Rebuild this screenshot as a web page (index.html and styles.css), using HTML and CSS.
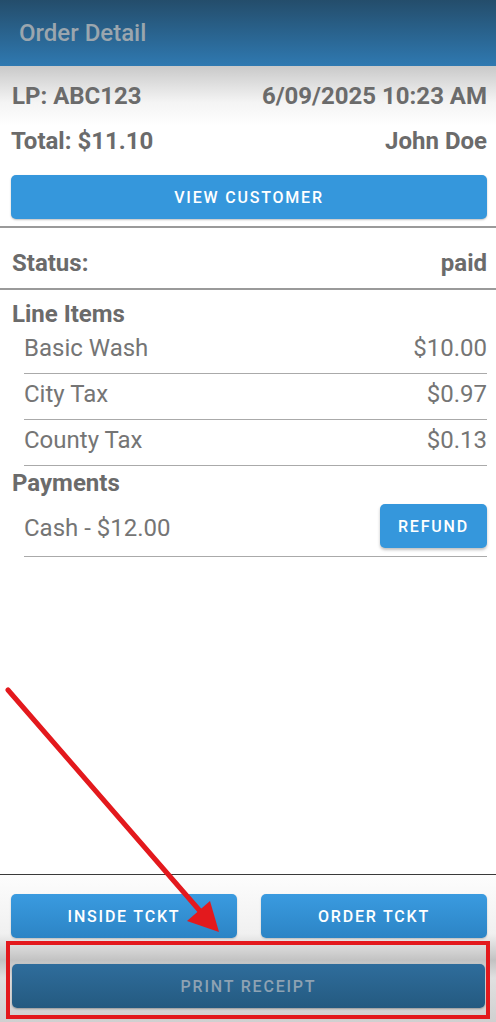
FILE: index.html
```html
<!DOCTYPE html>
<html lang="en">
<head>
    <meta charset="UTF-8">
    <meta name="viewport" content="width=device-width, initial-scale=1.0">
    <title>Order Detail</title>
    <link rel="stylesheet" href="styles.css">
</head>
<body>
    <div class="screen">
        <header class="app-bar">Order Detail</header>

        <main class="content">
            <div class="summary">
                <div class="row bold first">
                    <span>LP: ABC123</span>
                    <span>6/09/2025 10:23 AM</span>
                </div>
                <div class="row bold">
                    <span>Total: $11.10</span>
                    <span>John Doe</span>
                </div>
                <button class="btn btn-wide">View Customer</button>
            </div>

            <div class="row bold status">
                <span>Status:</span>
                <span>paid</span>
            </div>

            <h2 class="section-title">Line Items</h2>
            <ul class="items">
                <li class="item"><span>Basic Wash</span><span>$10.00</span></li>
                <li class="item"><span>City Tax</span><span>$0.97</span></li>
                <li class="item"><span>County Tax</span><span>$0.13</span></li>
            </ul>

            <h2 class="section-title">Payments</h2>
            <ul class="items">
                <li class="item payment"><span class="payment-label">Cash - $12.00</span><button class="btn btn-small">Refund</button></li>
            </ul>
        </main>

        <footer class="actions">
            <div class="action-row">
                <button class="btn btn-action">Inside Tckt</button>
                <button class="btn btn-action">Order Tckt</button>
            </div>
            <button class="btn btn-print">Print Receipt</button>
        </footer>

        <!-- annotation drawn over the screenshot -->
        <div class="highlight"></div>
        <svg class="arrow" width="496" height="1022" viewBox="0 0 496 1022">
            <line x1="8" y1="690" x2="200" y2="911" stroke="#e3191d" stroke-width="5" stroke-linecap="round"/>
            <polygon points="219,932 187,921 210,901" fill="#e3191d"/>
        </svg>
    </div>
</body>
</html>
```

FILE: styles.css
```css
* {
    box-sizing: border-box;
}
body {
    margin: 0;
    font-family: Roboto, "Liberation Sans", sans-serif;
    background: #fff;
}
.screen {
    position: relative;
    width: 496px;
    height: 1022px;
    display: flex;
    flex-direction: column;
    overflow: hidden;
}
.app-bar {
    height: 66px;
    padding: 0 19px;
    display: flex;
    align-items: center;
    font-size: 24px;
    font-weight: 500;
    color: #9ba6ae;
    background: linear-gradient(to bottom, #244d6b, #2f79b1);
}
.content {
    flex: 1;
    padding: 0 9px 0 12px;
}
.summary {
    margin: 0 -9px 0 -12px;
    padding: 14px 9px 7px 11px;
    background: linear-gradient(to bottom, #c9c9c9 0px, #f4f4f4 36px, #fff 60px);
    border-bottom: 2px solid #9a9a9a;
}
.row {
    display: flex;
    justify-content: space-between;
    align-items: center;
    height: 32px;
    font-size: 24px;
    color: #6b6b6b;
}
.row + .row {
    margin-top: 13px;
}
.row.first {
    padding-left: 1px;
}
.bold {
    font-weight: 700;
}
.btn {
    border: none;
    border-radius: 5px;
    color: #fff;
    font-family: inherit;
    font-size: 16px;
    font-weight: 500;
    letter-spacing: 1.8px;
    text-transform: uppercase;
    cursor: pointer;
}
.btn-wide {
    display: block;
    width: 100%;
    height: 44px;
    margin-top: 18px;
    background: #3597dc;
    box-shadow: 0 1px 2px rgba(0, 0, 0, 0.25);
}
.status {
    margin: 0 -9px 0 -12px;
    padding: 10px 9px 0 12px;
    height: 62px;
    border-bottom: 2px solid #9a9a9a;
}
.section-title {
    margin: 8px 0 0;
    height: 30px;
    padding-top: 3px;
    line-height: 27px;
    font-size: 24px;
    font-weight: 700;
    color: #6b6b6b;
}
.items {
    list-style: none;
    margin: 0;
    padding: 0 0 0 12px;
}
.items + .section-title {
    margin-top: 1px;
}
.item {
    display: flex;
    justify-content: space-between;
    align-items: center;
    padding: 7px 0 12px;
    line-height: 26px;
    font-size: 24px;
    color: #757575;
    border-bottom: 1px solid #aaa;
}
.payment {
    padding: 7px 0 8px;
}
.payment-label {
    padding-top: 3px;
}
.btn-small {
    width: 107px;
    height: 44px;
    padding: 0;
    background: #3597dc;
    box-shadow: 0 2px 3px rgba(0, 0, 0, 0.25);
}
.actions {
    height: 148px;
    padding: 19px 9px 0 11px;
    border-top: 1px solid #3a3a3a;
    background: linear-gradient(to bottom, #fdfdfd 0%, #f0f0f0 40%, #c2c2c2 58%, #e0e0e0 70%, #d0d0d0 100%);
}
.action-row {
    display: flex;
    gap: 24px;
}
.btn-action {
    flex: 1;
    height: 44px;
    background: linear-gradient(to bottom, #3a9be0, #2c84c5);
    box-shadow: 0 1px 2px rgba(0, 0, 0, 0.2);
}
.btn-print {
    display: block;
    width: 473px;
    height: 44px;
    margin: 26px 0 0 1px;
    color: #8ea2b3;
    background: linear-gradient(to bottom, #2f6d9c, #245a80);
    box-shadow: 0 1px 2px rgba(0, 0, 0, 0.3);
}
.highlight {
    position: absolute;
    left: 6px;
    top: 941px;
    width: 484px;
    height: 78px;
    border: 4px solid #e3191d;
}
.arrow {
    position: absolute;
    left: 0;
    top: 0;
    pointer-events: none;
}
```
